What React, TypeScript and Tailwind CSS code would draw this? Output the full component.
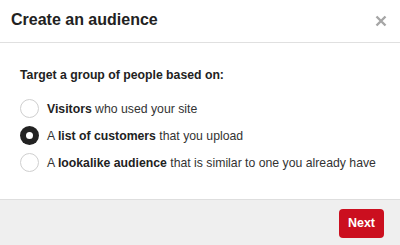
import { useState } from "react";

const OPTIONS = [
  { id: "visitors", pre: "", bold: "Visitors", post: " who used your site" },
  { id: "list", pre: "A ", bold: "list of customers", post: " that you upload" },
  {
    id: "lookalike",
    pre: "A ",
    bold: "lookalike audience",
    post: " that is similar to one you already have",
  },
];

export default function App() {
  const [selected, setSelected] = useState("list");

  return (
    <div className="flex h-[245px] w-[400px] flex-col bg-white font-['Liberation_Sans',Arial,sans-serif] text-[#333]">
      <div className="flex h-[43px] items-center justify-between border-b border-[#e0e0e0] pl-[11px] pr-[13px]">
        <h1 className="pb-[2px] text-[16px] font-bold text-[#222]">Create an audience</h1>
        <button type="button" aria-label="Close" className="text-[#a6a6a6]">
          <svg width="12" height="12" viewBox="0 0 12 12">
            <path d="M1.5 1.5l9 9M10.5 1.5l-9 9" stroke="currentColor" strokeWidth="2.4" />
          </svg>
        </button>
      </div>

      <div className="flex-1 px-[20px] pt-[23px]">
        <p className="text-[12.25px] font-bold text-[#222]">Target a group of people based on:</p>
        <div className="mt-[15px] flex flex-col gap-[8px]">
          {OPTIONS.map((o) => {
            const on = selected === o.id;
            return (
              <label
                key={o.id}
                className="flex h-[19px] cursor-pointer items-center gap-[8px] whitespace-nowrap text-[12.25px] text-[#333]"
                onClick={() => setSelected(o.id)}
              >
                <span
                  className={
                    on
                      ? "flex h-[19px] w-[19px] items-center justify-center rounded-full bg-[#222]"
                      : "h-[19px] w-[19px] rounded-full border border-[#cfcfcf] bg-white"
                  }
                >
                  {on && <span className="h-[7px] w-[7px] rounded-full bg-white" />}
                </span>
                <span>
                  {o.pre}
                  <b className="font-bold text-[#222]">{o.bold}</b>
                  {o.post}
                </span>
              </label>
            );
          })}
        </div>
      </div>

      <div className="flex h-[46px] items-start justify-end border-t border-[#dedede] bg-[#efefef] pr-[16px] pt-[9px]">
        <button
          type="button"
          className="h-[29px] rounded-[4px] bg-[#cb0f1f] px-[9px] text-[12.5px] font-bold text-white"
        >
          Next
        </button>
      </div>
    </div>
  );
}
